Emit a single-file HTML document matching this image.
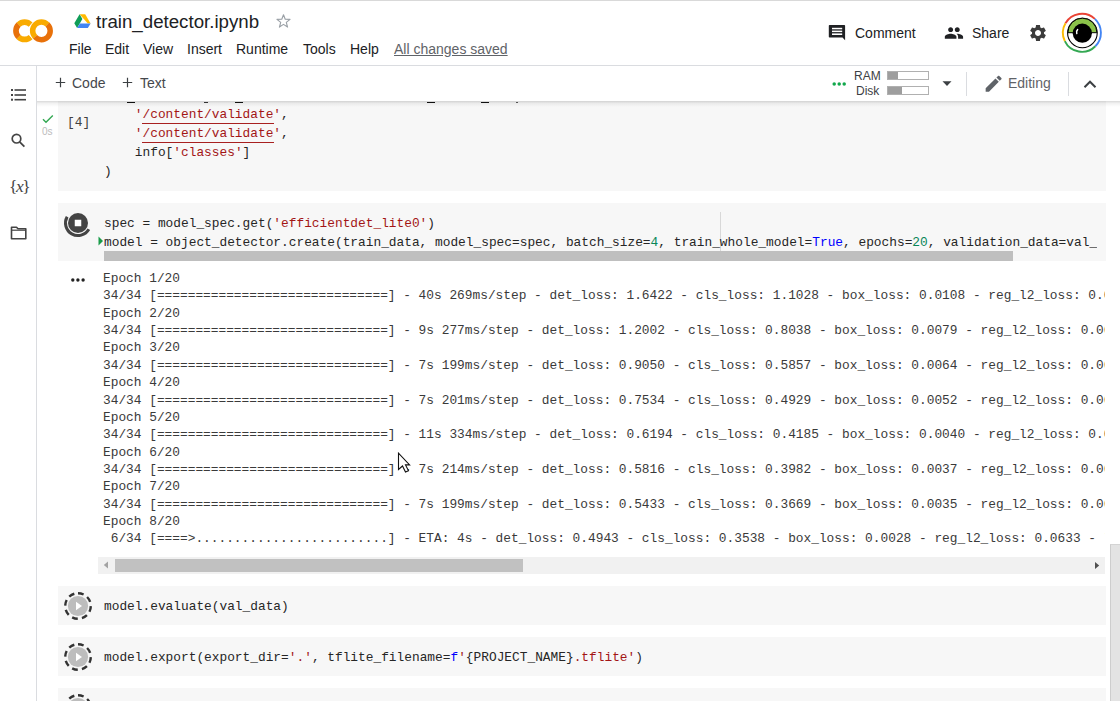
<!DOCTYPE html>
<html><head><meta charset="utf-8">
<style>
*{box-sizing:border-box}
html,body{margin:0;padding:0;width:1120px;height:701px;overflow:hidden;background:#fff;position:relative}
body{font-family:"Liberation Sans",sans-serif;color:#202124}
.a{position:absolute;white-space:pre}
.mono{font-family:"Liberation Mono",monospace;font-size:12.83px;line-height:19px;color:#262626}
.s{color:#a31515}
.n{color:#098658}
.k{color:#0000ff}
.cell{position:absolute;left:58px;width:1048px;background:#f7f7f7}
</style></head><body>

<!-- notebook content (under header) -->
<div id="nb">
  <!-- cell 1 -->
  <div class="cell" style="top:60px;height:131px"></div>
  <div class="a mono" style="left:104px;top:86px"> 
    <span class="s">'/content/validate'</span>,
    <span class="s">'/content/validate'</span>,
    info[<span class="s">'classes'</span>]
)</div>
  <div class="a" style="left:142px;top:123px;width:132px;height:1px;background:#a82020"></div>
  <div class="a" style="left:142px;top:142px;width:132px;height:1px;background:#a82020"></div>
  <!-- gutter of cell 1 -->
  <svg class="a" style="left:42px;top:114px" width="12" height="10" viewBox="0 0 12 10"><path d="M1 5.2 L4 8.2 L10.8 1.4" fill="none" stroke="#34a853" stroke-width="1.4"/></svg>
  <div class="a" style="left:42px;top:126px;font-size:10px;line-height:11px;color:#bcbcbc">0s</div>
  <div class="a mono" style="left:67px;top:113px;color:#424242">[4]</div>

  <!-- cell 2 -->
  <div class="cell" style="top:203px;height:58px"></div>
  <svg class="a" style="left:62px;top:207px" width="32" height="32" viewBox="0 0 32 32">
    <circle cx="16" cy="16" r="10" fill="#444"/>
    <rect x="12.75" y="12.75" width="6.5" height="6.5" fill="#fff"/>
    <path d="M5.17 9.75 A12.5 12.5 0 0 0 26.83 22.25" fill="none" stroke="#444" stroke-width="3"/>
  </svg>
  <div class="a" style="left:720px;top:212px;width:1px;height:49px;background:#d8d8d8"></div>
  <div class="a" style="left:98px;top:203px;width:999px;height:58px;overflow:hidden">
    <div class="a mono" style="left:6px;top:11px">spec = model_spec.get(<span class="s">'efficientdet_lite0'</span>)
model = object_detector.create(train_data, model_spec=spec, batch_size=<span class="n">4</span>, train_whole_model=<span class="k">True</span>, epochs=<span class="n">20</span>, validation_data=val_data)</div>
  </div>
  <svg class="a" style="left:98px;top:236px" width="6" height="10" viewBox="0 0 6 10"><path d="M0.5 0.5 L5 5 L0.5 9.5 Z" fill="#1a9c4a"/></svg>
  <div class="a" style="left:104px;top:251px;width:909px;height:10px;background:#bfbfbf"></div>

  <!-- output -->
  <svg class="a" style="left:70px;top:277px" width="16" height="6" viewBox="0 0 16 6"><circle cx="2.8" cy="3" r="1.7" fill="#222"/><circle cx="7.9" cy="3" r="1.7" fill="#222"/><circle cx="13.1" cy="3" r="1.7" fill="#222"/></svg>
  <div class="a" style="left:98px;top:262px;width:1007px;height:295px;overflow:hidden">
    <div class="a mono" style="left:5px;top:8px;line-height:17.36px;color:#3a3a3a">Epoch 1/20
34/34 [==============================] - 40s 269ms/step - det_loss: 1.6422 - cls_loss: 1.1028 - box_loss: 0.0108 - reg_l2_loss: 0.0630 - loss: 2.8188
Epoch 2/20
34/34 [==============================] - 9s 277ms/step - det_loss: 1.2002 - cls_loss: 0.8038 - box_loss: 0.0079 - reg_l2_loss: 0.0630 - loss: 2.0671
Epoch 3/20
34/34 [==============================] - 7s 199ms/step - det_loss: 0.9050 - cls_loss: 0.5857 - box_loss: 0.0064 - reg_l2_loss: 0.0630 - loss: 0.9680
Epoch 4/20
34/34 [==============================] - 7s 201ms/step - det_loss: 0.7534 - cls_loss: 0.4929 - box_loss: 0.0052 - reg_l2_loss: 0.0631 - loss: 0.8165
Epoch 5/20
34/34 [==============================] - 11s 334ms/step - det_loss: 0.6194 - cls_loss: 0.4185 - box_loss: 0.0040 - reg_l2_loss: 0.0631 - loss: 0.6825
Epoch 6/20
34/34 [==============================] - 7s 214ms/step - det_loss: 0.5816 - cls_loss: 0.3982 - box_loss: 0.0037 - reg_l2_loss: 0.0632 - loss: 0.6448
Epoch 7/20
34/34 [==============================] - 7s 199ms/step - det_loss: 0.5433 - cls_loss: 0.3669 - box_loss: 0.0035 - reg_l2_loss: 0.0632 - loss: 0.6065
Epoch 8/20
 6/34 [====&gt;.........................] - ETA: 4s - det_loss: 0.4943 - cls_loss: 0.3538 - box_loss: 0.0028 - reg_l2_loss: 0.0633 - loss: 0.5576</div>
  </div>
  <!-- output h scrollbar -->
  <div class="a" style="left:98px;top:557px;width:1007px;height:17px;background:#f1f1f1"></div>
  <div class="a" style="left:115px;top:559px;width:408px;height:13px;background:#c1c1c1"></div>
  <svg class="a" style="left:103px;top:561px" width="6" height="8" viewBox="0 0 6 8"><path d="M5 0.5 L0.8 4 L5 7.5 Z" fill="#a3a3a3"/></svg>
  <svg class="a" style="left:1094px;top:561px" width="6" height="9" viewBox="0 0 6 9"><path d="M1 1 L5.2 4.5 L1 8 Z" fill="#505050"/></svg>

  <!-- cell 3 -->
  <div class="cell" style="top:586px;height:39px"></div>
  <svg class="a" style="left:62px;top:590px" width="32" height="32" viewBox="0 0 32 32">
    <circle cx="16" cy="16" r="10.1" fill="#bdbdbd"/>
    <path d="M14 11.8 L20 16 L14 20.2 Z" fill="#fff"/>
    <circle cx="16" cy="16" r="12.8" fill="none" stroke="#333" stroke-width="2.4" stroke-dasharray="5.8 4.25" transform="rotate(-90 16 16)"/>
  </svg>
  <div class="a mono" style="left:104px;top:597px">model.evaluate(val_data)</div>

  <!-- cell 4 -->
  <div class="cell" style="top:637px;height:39px"></div>
  <svg class="a" style="left:62px;top:641px" width="32" height="32" viewBox="0 0 32 32">
    <circle cx="16" cy="16" r="10.1" fill="#bdbdbd"/>
    <path d="M14 11.8 L20 16 L14 20.2 Z" fill="#fff"/>
    <circle cx="16" cy="16" r="12.8" fill="none" stroke="#333" stroke-width="2.4" stroke-dasharray="5.8 4.25" transform="rotate(-90 16 16)"/>
  </svg>
  <div class="a mono" style="left:104px;top:648px">model.export(export_dir=<span class="s">'.'</span>, tflite_filename=<span class="k">f</span><span class="s">'</span>{PROJECT_NAME}<span class="s">.tflite'</span>)</div>

  <!-- cell 5 -->
  <div class="cell" style="top:688px;height:40px"></div>
  <svg class="a" style="left:62px;top:692px" width="32" height="32" viewBox="0 0 32 32">
    <circle cx="16" cy="16" r="10.1" fill="#bdbdbd"/>
    <circle cx="16" cy="16" r="12.8" fill="none" stroke="#333" stroke-width="2.4" stroke-dasharray="5.8 4.25" transform="rotate(-90 16 16)"/>
  </svg>

  <!-- page scrollbar -->
  <div class="a" style="left:1110px;top:544px;width:10px;height:160px;background:#e3e3e3;border-left:1px solid #cdcdcd;border-top:1px solid #d4d4d4"></div>

  <!-- cursor -->
  <svg class="a" style="left:397px;top:451.6px" width="14" height="22" viewBox="0 0 14 22"><path d="M1.5 1.2 L1.5 17.5 L5.5 14 L8.5 20 L11.5 18.8 L8.5 12.9 L12.6 12.9 Z" fill="#fff" stroke="#111" stroke-width="1.1" stroke-linejoin="miter"/></svg>
</div>

<!-- sidebar -->


<!-- header -->
<div class="a" style="left:0;top:0;width:1120px;height:101px;background:#fff"></div>
<div class="a" style="left:37px;top:101px;width:1083px;height:6px;background:linear-gradient(rgba(0,0,0,.15),rgba(0,0,0,.05) 40%,rgba(0,0,0,0))"></div>
<div class="a" style="left:0;top:0;width:1120px;height:1px;background:#d9d9d9"></div>
<div class="a" style="left:0;top:65px;width:1120px;height:1px;background:#dadce0"></div>
<div class="a" style="left:0;top:101px;width:36px;height:600px;background:#fff"></div>
<div class="a" style="left:36px;top:66px;width:1px;height:635px;background:#dadce0"></div>


<!-- logo -->
<svg class="a" style="left:10px;top:16px" width="46" height="30" viewBox="10 16 46 30"><path d="M30.72 24.68 A8.65 8.65 0 0 0 18.48 24.68" fill="none" stroke="#F9AB00" stroke-width="5.7"/><path d="M18.48 36.92 A8.65 8.65 0 0 0 30.72 36.92" fill="none" stroke="#F9AB00" stroke-width="5.7"/><path d="M18.59 24.58 A8.65 8.65 0 0 0 18.59 37.02" fill="none" stroke="#E8710A" stroke-width="5.7"/><path d="M35.45 20.54 A11.9 11.9 0 0 0 35.45 41.16" fill="none" stroke="#fff" stroke-width="0.9"/><path d="M47.59 24.66 A8.75 8.75 0 0 0 35.21 37.04" fill="none" stroke="#F9AB00" stroke-width="5.5"/><path d="M35.11 36.93 A8.75 8.75 0 1 0 47.48 24.56" fill="none" stroke="#E8710A" stroke-width="5.5"/></svg>
<!-- drive icon -->
<svg class="a" style="left:74px;top:14px" width="17" height="14" viewBox="0 0 17 14">
  <path d="M5.6 0.3 L11.2 0.3 L16.6 9.6 L13.8 9.6 Z" fill="#FFBA00"/>
  <path d="M5.6 0.3 L8.4 5.1 L3.1 14 L0.3 9.3 Z" fill="#0F9D58"/>
  <path d="M3.1 14 L13.8 14 L16.6 9.4 L5.9 9.4 Z" fill="#4285F4"/>
</svg>
<div class="a" style="left:96px;top:12px;font-size:18.7px;line-height:20px;color:#202124">train_detector.ipynb</div>
<svg class="a" style="left:275px;top:13px" width="17" height="16" viewBox="0 0 24 24"><path d="M12 2.6 L14.6 9.3 L21.8 9.6 L16.2 14.1 L18.1 21.1 L12 17.1 L5.9 21.1 L7.8 14.1 L2.2 9.6 L9.4 9.3 Z" fill="none" stroke="#9aa0a6" stroke-width="1.7" stroke-linejoin="round"/></svg>
<div class="a" style="left:69px;top:41px;font-size:14px;line-height:16px;color:#202124">File</div>
<div class="a" style="left:105px;top:41px;font-size:14px;line-height:16px;color:#202124">Edit</div>
<div class="a" style="left:143px;top:41px;font-size:14px;line-height:16px;color:#202124">View</div>
<div class="a" style="left:187px;top:41px;font-size:14px;line-height:16px;color:#202124">Insert</div>
<div class="a" style="left:236px;top:41px;font-size:14px;line-height:16px;color:#202124">Runtime</div>
<div class="a" style="left:303px;top:41px;font-size:14px;line-height:16px;color:#202124">Tools</div>
<div class="a" style="left:350px;top:41px;font-size:14px;line-height:16px;color:#202124">Help</div>
<div class="a" style="left:394px;top:41px;font-size:14px;line-height:16px;color:#5f6368;text-decoration:underline">All changes saved</div>

<!-- comment -->
<svg class="a" style="left:828px;top:24px" width="19" height="17" viewBox="828 24 19 17"><path d="M829.6 25 H844.3 A0.8 0.8 0 0 1 845.1 25.8 V40.2 L842.5 37.6 H829.6 A0.8 0.8 0 0 1 828.8 36.8 V25.8 A0.8 0.8 0 0 1 829.6 25 Z" fill="#202124"/><rect x="832" y="27.8" width="10.2" height="1.5" fill="#fff"/><rect x="832" y="30.6" width="10.2" height="1.5" fill="#fff"/><rect x="832" y="33.4" width="10.2" height="1.6" fill="#fff"/></svg>
<div class="a" style="left:855px;top:25px;font-size:14px;line-height:16px;color:#202124">Comment</div>
<!-- share -->
<svg class="a" style="left:944px;top:22.85px" width="19.92" height="19.92" viewBox="0 0 24 24"><path fill="#202124" d="M16 11c1.66 0 2.99-1.34 2.99-3S17.66 5 16 5c-1.66 0-3 1.34-3 3s1.34 3 3 3zm-8 0c1.66 0 2.99-1.34 2.99-3S9.66 5 8 5C6.34 5 5 6.34 5 8s1.34 3 3 3zm0 2c-2.33 0-7 1.170-7 3.5V19h14v-2.5c0-2.33-4.67-3.5-7-3.5zm8 0c-.29 0-.62.02-.97.05 1.16.84 1.970 1.97 1.97 3.45V19h6v-2.5c0-2.33-4.67-3.5-7-3.5z"/></svg>
<div class="a" style="left:972px;top:25px;font-size:14px;line-height:16px;color:#202124">Share</div>
<!-- gear -->
<svg class="a" style="left:1028px;top:22.75px" width="20" height="20" viewBox="0 0 24 24"><path fill="#3c3c3c" d="M19.14 12.94c.04-.3.06-.61.06-.94 0-.32-.02-.64-.07-.94l2.03-1.58c.18-.14.23-.41.12-.61l-1.92-3.32c-.12-.22-.37-.29-.59-.22l-2.39.96c-.5-.38-1.03-.7-1.62-.94l-.36-2.54c-.04-.24-.24-.41-.48-.41h-3.84c-.24 0-.43.17-.47.41l-.36 2.54c-.59.24-1.13.57-1.62.94l-2.39-.96c-.22-.08-.47 0-.59.22L2.74 8.87c-.12.21-.08.47.12.61l2.03 1.58c-.05.3-.09.63-.09.94s.02.64.07.94l-2.03 1.58c-.18.14-.23.41-.12.61l1.92 3.32c.12.22.37.29.59.22l2.39-.96c.5.38 1.03.7 1.62.94l.36 2.54c.05.24.24.41.48.41h3.84c.24 0 .44-.17.47-.41l.36-2.54c.59-.24 1.13-.56 1.62-.94l2.39.96c.22.08.47 0 .59-.22l1.92-3.32c.12-.22.07-.47-.12-.61l-2.01-1.58zM12 15.6c-1.98 0-3.6-1.62-3.6-3.6s1.62-3.6 3.6-3.6 3.6 1.62 3.6 3.6-1.62 3.6-3.6 3.6z"/></svg>
<!-- avatar -->
<svg class="a" style="left:1058px;top:9px" width="48" height="48" viewBox="1058 9 48 48">
  <g fill="none" stroke-width="1.9"><path d="M1065.45 23.30 A19.0 19.0 0 0 1 1094.86 18.90" stroke="#EA4335"/><path d="M1094.86 18.90 A19.0 19.0 0 0 1 1095.34 46.24" stroke="#4285F4"/><path d="M1095.34 46.24 A19.0 19.0 0 0 1 1064.82 41.13" stroke="#34A853"/><path d="M1064.82 41.13 A19.0 19.0 0 0 1 1065.45 23.30" stroke="#FBBC04"/></g>
  <circle cx="1082.4" cy="33.0" r="14.8" fill="#fff" stroke="#000" stroke-width="1.1"/>
  <path d="M1067.90 32.70 A14.5 14.5 0 0 1 1096.90 32.70 Z" fill="#8BC34A" stroke="#000" stroke-width="1"/>
  <circle cx="1082.3" cy="33.2" r="9.6" fill="#000"/>
  <path d="M1077.6 29.6 C1076.5 30.6 1076.3 32.2 1076.8 33.6" stroke="#fff" stroke-width="1.5" fill="none" stroke-linecap="round"/>
</svg>

<!-- toolbar -->
<svg class="a" style="left:55px;top:77px" width="11" height="11" viewBox="0 0 11 11"><path d="M5.5 0.8 V10.2 M0.8 5.5 H10.2" stroke="#3c4043" stroke-width="1.2"/></svg>
<div class="a" style="left:72px;top:75px;font-size:14px;line-height:16px;color:#45484c">Code</div>
<svg class="a" style="left:122px;top:77px" width="11" height="11" viewBox="0 0 11 11"><path d="M5.5 0.8 V10.2 M0.8 5.5 H10.2" stroke="#3c4043" stroke-width="1.2"/></svg>
<div class="a" style="left:140px;top:75px;font-size:14px;line-height:16px;color:#45484c">Text</div>

<svg class="a" style="left:832px;top:82px" width="16" height="4" viewBox="0 0 16 4"><circle cx="2.2" cy="2" r="1.75" fill="#12a84c"/><circle cx="7.2" cy="2" r="1.75" fill="#12a84c"/><circle cx="12.2" cy="2" r="1.75" fill="#12a84c"/></svg>
<div class="a" style="left:854px;top:69px;font-size:12px;line-height:14px;color:#3c4043">RAM</div>
<div class="a" style="left:856px;top:84px;font-size:12px;line-height:14px;color:#3c4043">Disk</div>
<div class="a" style="left:887px;top:71px;width:42px;height:9px;border:1px solid #b0b0b0;background:#fff"></div>
<div class="a" style="left:888px;top:72px;width:10px;height:7px;background:#9e9e9e"></div>
<div class="a" style="left:887px;top:86px;width:42px;height:9px;border:1px solid #b0b0b0;background:#fff"></div>
<div class="a" style="left:888px;top:87px;width:14px;height:7px;background:#9e9e9e"></div>
<svg class="a" style="left:942px;top:81px" width="10" height="6" viewBox="0 0 10 6"><path d="M0.5 0.3 L9.5 0.3 L5 5 Z" fill="#3c4043"/></svg>
<div class="a" style="left:966px;top:72px;width:1px;height:24px;background:#dadce0"></div>
<svg class="a" style="left:983.3px;top:73.3px" width="21.3" height="21.3" viewBox="0 0 24 24"><path fill="#5f6368" d="M3 17.25V21h3.75L17.81 9.94l-3.75-3.75L3 17.25zM20.71 7.04c.39-.39.39-1.02 0-1.41l-2.34-2.34c-.39-.39-1.02-.39-1.41 0l-1.83 1.83 3.75 3.75 1.83-1.83z"/></svg>
<div class="a" style="left:1008px;top:75px;font-size:14px;line-height:16px;color:#5f6368">Editing</div>
<div class="a" style="left:1068px;top:72px;width:1px;height:24px;background:#dadce0"></div>
<svg class="a" style="left:1083px;top:79px" width="14" height="10" viewBox="0 0 14 10"><path d="M1.5 8.2 L7 2.7 L12.5 8.2" fill="none" stroke="#3c4043" stroke-width="2"/></svg>

<!-- sidebar icons -->
<svg class="a" style="left:10px;top:88px" width="18" height="14" viewBox="0 0 18 14">
  <rect x="1" y="1" width="2" height="2" fill="#444"/><rect x="1" y="6" width="2" height="2" fill="#444"/><rect x="1" y="10.7" width="2" height="2" fill="#444"/>
  <rect x="4.5" y="1.2" width="11.5" height="1.6" fill="#444"/><rect x="4.5" y="6.2" width="11.5" height="1.6" fill="#444"/><rect x="4.5" y="10.9" width="11.5" height="1.6" fill="#444"/>
</svg>
<svg class="a" style="left:9px;top:132px" width="18" height="17" viewBox="0 0 18 17"><circle cx="7.5" cy="6.7" r="4.3" fill="none" stroke="#444" stroke-width="1.7"/><path d="M10.6 9.9 L15.4 14.7" stroke="#444" stroke-width="1.8"/></svg>
<div class="a" style="left:9px;top:176px;font-family:'Liberation Serif',serif;font-size:17.5px;line-height:20px;letter-spacing:-1.5px;color:#444">{<i>x</i>}</div>
<svg class="a" style="left:10px;top:225px" width="18" height="16" viewBox="0 0 18 16"><path d="M1.5 2.2 H6.5 L8 3.8 H15.8 V13.8 H1.5 Z" fill="none" stroke="#444" stroke-width="1.6" stroke-linejoin="round"/><path d="M1.5 5.2 H15.8" stroke="#444" stroke-width="1.2"/></svg>


<div class="a" style="left:127px;top:102px;width:8px;height:1px;background:#111"></div>
<div class="a" style="left:204px;top:102px;width:4px;height:1px;background:#333"></div>
<div class="a" style="left:235px;top:102px;width:8px;height:1px;background:#111"></div>
<div class="a" style="left:427px;top:102px;width:8px;height:1px;background:#111"></div>
<div class="a" style="left:481px;top:102px;width:8px;height:1px;background:#111"></div>
<div class="a" style="left:516px;top:102px;width:2px;height:1px;background:#555"></div>
</body></html>
